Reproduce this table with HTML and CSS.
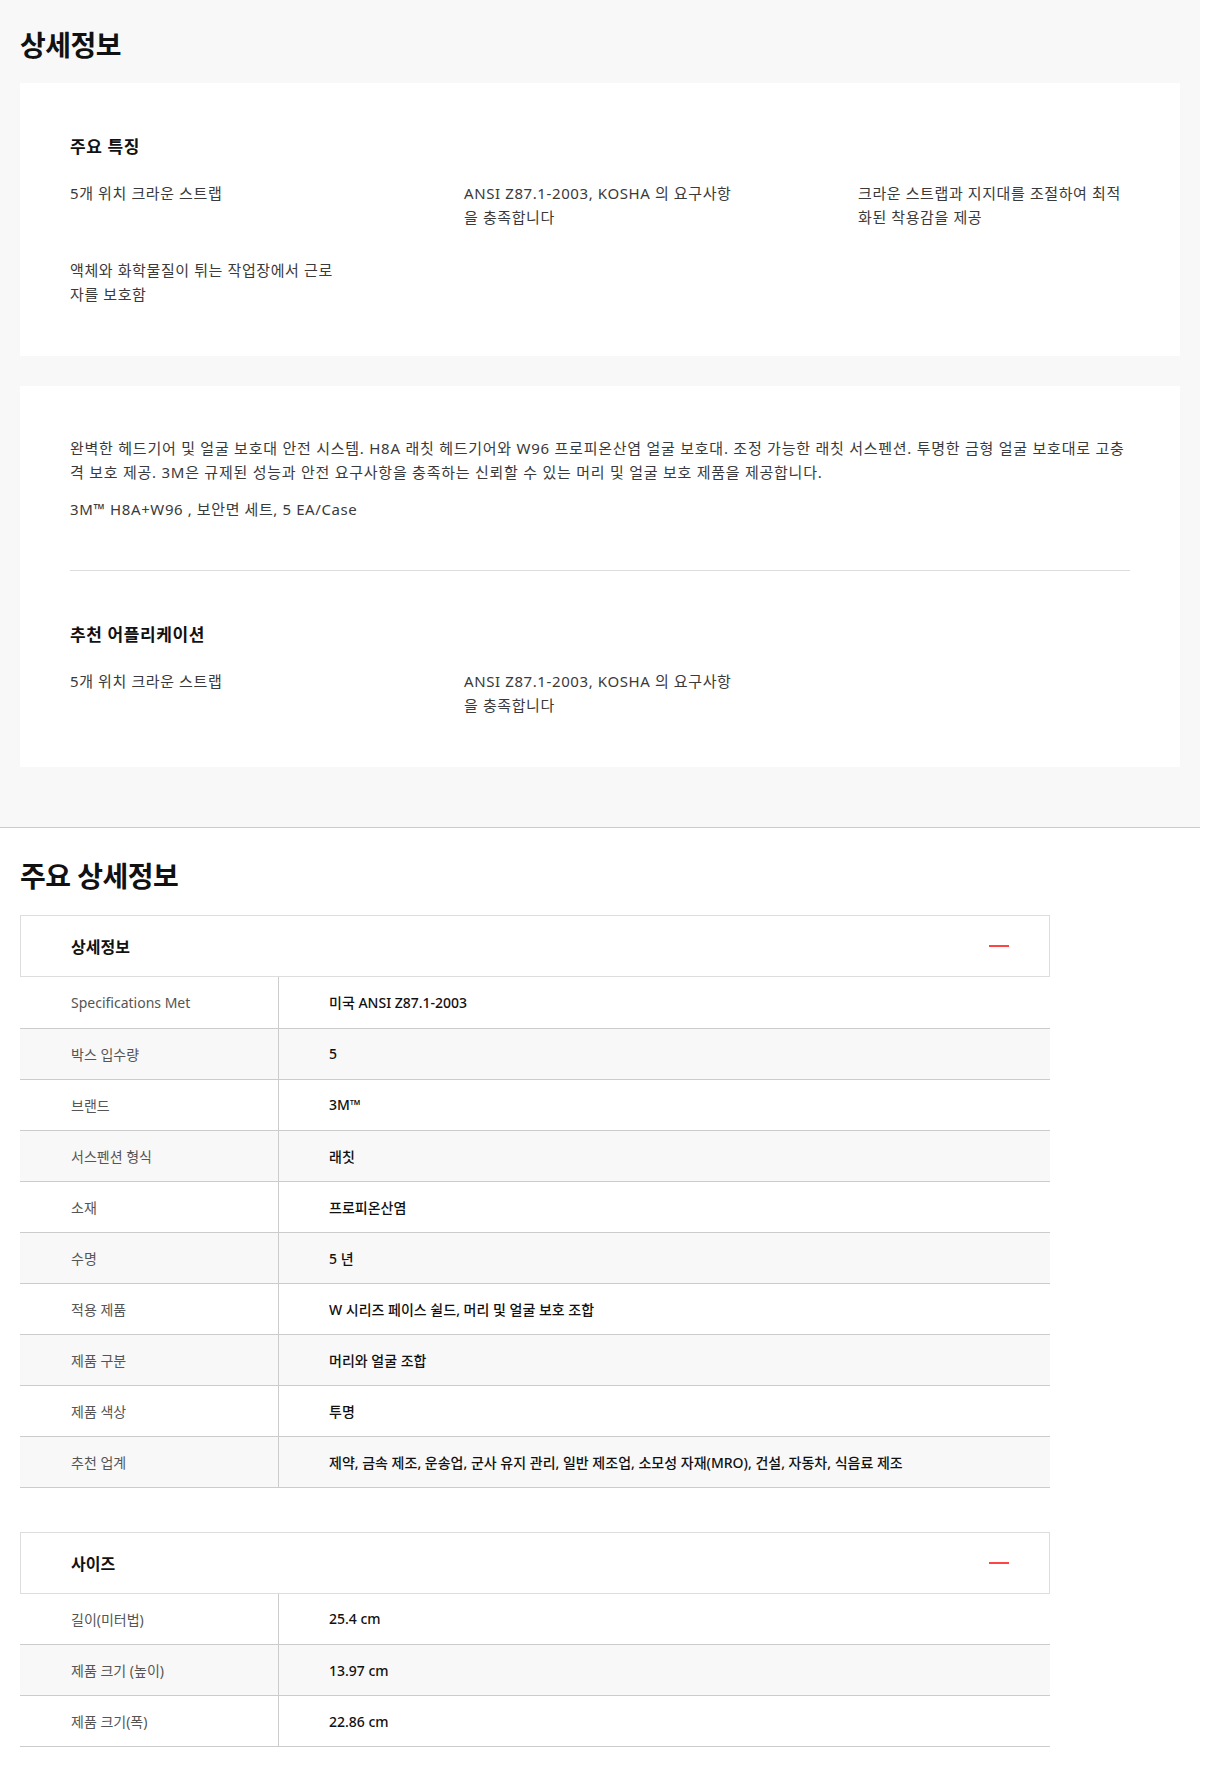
FILE: index.html
```html
<!DOCTYPE html>
<html lang="ko">
<head>
  <meta charset="UTF-8">
  <meta name="viewport" content="width=device-width, initial-scale=1.0">
  <title>상세정보</title>
  <link rel="stylesheet" href="styles.css">
</head>
<body>
  <div class="page">
    <section class="overview">
      <h2 class="section-title">상세정보</h2>

      <div class="card">
        <h3 class="card-title">주요 특징</h3>
        <ul class="feature-list">
          <li>5개 위치 크라운 스트랩</li>
          <li>ANSI Z87.1-2003, KOSHA 의 요구사항을 충족합니다</li>
          <li>크라운 스트랩과 지지대를 조절하여 최적화된 착용감을 제공</li>
          <li>액체와 화학물질이 튀는 작업장에서 근로자를 보호함</li>
        </ul>
      </div>

      <div class="card">
        <div class="description">
          <p>완벽한 헤드기어 및 얼굴 보호대 안전 시스템. H8A 래칫 헤드기어와 W96 프로피온산염 얼굴 보호대. 조정 가능한 래칫 서스펜션. 투명한 금형 얼굴 보호대로 고충격 보호 제공. 3M은 규제된 성능과 안전 요구사항을 충족하는 신뢰할 수 있는 머리 및 얼굴 보호 제품을 제공합니다.</p>
          <p>3M™ H8A+W96 , 보안면 세트, 5 EA/Case</p>
        </div>
        <div class="applications">
          <h3 class="card-title">추천 어플리케이션</h3>
          <ul class="feature-list">
            <li>5개 위치 크라운 스트랩</li>
            <li>ANSI Z87.1-2003, KOSHA 의 요구사항을 충족합니다</li>
          </ul>
        </div>
      </div>
    </section>

    <section class="specs">
      <h2 class="section-title">주요 상세정보</h2>

      <div class="spec-group">
        <div class="spec-head">
          <span>상세정보</span>
          <span class="toggle"></span>
        </div>
        <table class="spec-table">
          <tr><th>Specifications Met</th><td>미국 ANSI Z87.1-2003</td></tr>
          <tr><th>박스 입수량</th><td>5</td></tr>
          <tr><th>브랜드</th><td>3M™</td></tr>
          <tr><th>서스펜션 형식</th><td>래칫</td></tr>
          <tr><th>소재</th><td>프로피온산염</td></tr>
          <tr><th>수명</th><td>5 년</td></tr>
          <tr><th>적용 제품</th><td>W 시리즈 페이스 쉴드, 머리 및 얼굴 보호 조합</td></tr>
          <tr><th>제품 구분</th><td>머리와 얼굴 조합</td></tr>
          <tr><th>제품 색상</th><td>투명</td></tr>
          <tr><th>추천 업계</th><td>제약, 금속 제조, 운송업, 군사 유지 관리, 일반 제조업, 소모성 자재(MRO), 건설, 자동차, 식음료 제조</td></tr>
        </table>
      </div>

      <div class="spec-group">
        <div class="spec-head">
          <span>사이즈</span>
          <span class="toggle"></span>
        </div>
        <table class="spec-table">
          <tr><th>길이(미터법)</th><td>25.4 cm</td></tr>
          <tr><th>제품 크기 (높이)</th><td>13.97 cm</td></tr>
          <tr><th>제품 크기(폭)</th><td>22.86 cm</td></tr>
        </table>
      </div>
    </section>
  </div>
</body>
</html>
```

FILE: styles.css
```css
body {
  margin: 0;
  background: #fff;
  font-family: "Noto Sans", "Noto Sans CJK KR", sans-serif;
  color: #333;
  font-feature-settings: "palt";
}

.page {
  width: 1200px;
}

/* 상단 회색 영역 */
.overview {
  background: #f8f8f8;
  padding: 27px 20px 60px;
  border-bottom: 1px solid #ccc;
}

.section-title {
  margin: 0 0 20px;
  font-size: 28px;
  line-height: 36px;
  font-weight: 700;
  color: #111;
  letter-spacing: -0.5px;
}

.card {
  background: #fff;
  padding: 50px;
}

.card + .card {
  margin-top: 30px;
}

.card-title {
  margin: 0 0 20px;
  font-size: 17px;
  line-height: 28px;
  font-weight: 700;
  color: #111;
  letter-spacing: 0.6px;
}

.feature-list {
  list-style: none;
  margin: 0;
  padding: 0;
  display: grid;
  grid-template-columns: repeat(3, 272px);
  column-gap: 122px;
  row-gap: 29px;
}

.feature-list li,
.description p {
  font-size: 15px;
  line-height: 24px;
  color: #3a3a3a;
  letter-spacing: 0.6px;
}

.description {
  padding-bottom: 49px;
  border-bottom: 1px solid #ddd;
}

.description p {
  margin: 0;
}

.description p:first-child {
  letter-spacing: 0.75px;
}

.description p + p {
  margin-top: 13px;
}

.applications {
  padding-top: 50px;
}

/* 주요 상세정보 */
.specs {
  padding: 30px 20px 40px;
}

.specs .section-title {
  margin-bottom: 21px;
}

.spec-group {
  width: 1030px;
}

.spec-group + .spec-group {
  margin-top: 44px;
}

.spec-head {
  display: flex;
  align-items: center;
  justify-content: space-between;
  height: 60px;
  padding: 0 40px 0 50px;
  border: 1px solid #ddd;
  font-size: 16px;
  font-weight: 700;
  color: #111;
}

.toggle {
  width: 20px;
  height: 2px;
  background: #f44;
}

.spec-table {
  width: 100%;
  border-collapse: collapse;
}

.spec-table tr {
  height: 51px;
  border-bottom: 1px solid #ccc;
}

.spec-table tr:nth-child(even) {
  background: #f8f8f8;
}

.spec-table th,
.spec-table td {
  padding: 0 0 0 50px;
  font-size: 14px;
  text-align: left;
  vertical-align: middle;
}

.spec-table th {
  width: 207px;
  padding-left: 51px;
  border-right: 1px solid #ccc;
  font-weight: 400;
  color: #555;
}

.spec-table td {
  font-weight: 500;
  color: #111;
}
```
